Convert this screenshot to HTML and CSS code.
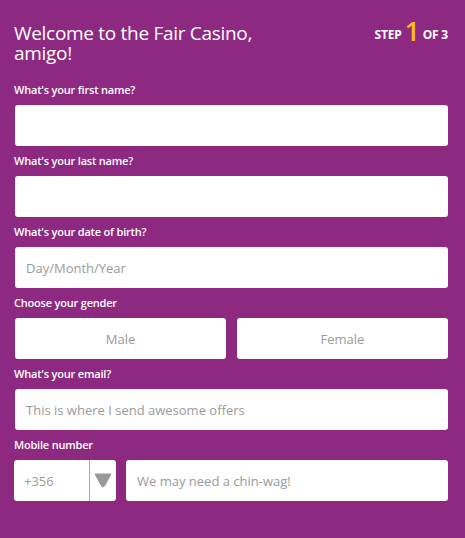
FILE: index.html
```html
<!DOCTYPE html>
<html>
<head>
    <title>Fair Casino - Sign up</title>
    <link rel="stylesheet" href="styles.css">
</head>
<body>
    <form class="signup">
        <div class="header">
            <h1>Welcome to the Fair Casino, amigo!</h1>
            <div class="step">STEP <span class="step-num">1</span> OF 3</div>
        </div>

        <div class="field">
            <label>What's your first name?</label>
            <input class="box" type="text">
        </div>

        <div class="field">
            <label>What's your last name?</label>
            <input class="box" type="text">
        </div>

        <div class="field">
            <label>What's your date of birth?</label>
            <input class="box" type="text" placeholder="Day/Month/Year">
        </div>

        <div class="field">
            <label>Choose your gender</label>
            <div class="gender">
                <button type="button" class="box choice">Male</button>
                <button type="button" class="box choice">Female</button>
            </div>
        </div>

        <div class="field">
            <label>What's your email?</label>
            <input class="box" type="text" placeholder="This is where I send awesome offers">
        </div>

        <div class="field">
            <label>Mobile number</label>
            <div class="phone">
                <div class="box code">
                    <span class="code-value">+356</span>
                    <span class="code-arrow">
                        <svg width="18" height="15" viewBox="0 0 18 15">
                            <path d="M1 1 H17 L10.5 13 Q9 15 7.5 13 Z" fill="#999" stroke="#999" stroke-linejoin="round"/>
                        </svg>
                    </span>
                </div>
                <input class="box number" type="text" placeholder="We may need a chin-wag!">
            </div>
        </div>
    </form>
</body>
</html>
```

FILE: styles.css
```css
body {
    margin: 0;
    background: #8e2981;
    font-family: "Open Sans", "Liberation Sans", sans-serif;
    color: #fff;
}
.signup {
    padding: 23px 17px 30px 14px;
    display: flex;
    flex-direction: column;
    gap: 8px;
}
.header {
    display: flex;
    justify-content: space-between;
    align-items: flex-start;
    margin-bottom: 12px;
}
.header h1 {
    margin: 0;
    width: 270px;
    font-size: 19px;
    font-weight: 400;
    line-height: 20px;
    letter-spacing: -0.3px;
}
.step {
    font-size: 12px;
    font-weight: 700;
    letter-spacing: -0.2px;
    line-height: 20px;
    margin-top: -2px;
}
.step-num {
    color: #fbbd12;
    font-size: 27px;
    font-weight: 600;
    vertical-align: -2px;
}
.field {
    display: flex;
    flex-direction: column;
    gap: 8px;
}
.field label {
    font-size: 11px;
    font-weight: 600;
    line-height: 14px;
    letter-spacing: -0.2px;
}
.box {
    box-sizing: border-box;
    height: 41px;
    margin-left: 1px;
    border: none;
    border-radius: 3px;
    background: #fff;
    font-family: inherit;
    font-size: 13px;
    color: #555;
    padding: 0 11px;
    outline: none;
}
.box::placeholder {
    color: #9a9a9a;
}
.gender {
    display: flex;
    gap: 10px;
}
.choice {
    flex: 1;
    color: #9a9a9a;
    text-align: center;
}
.phone {
    display: flex;
    gap: 10px;
}
.code {
    width: 102px;
    margin-left: 0;
    padding: 0;
    display: flex;
    align-items: center;
}
.code-value {
    width: 75px;
    padding-left: 10px;
    box-sizing: border-box;
    color: #9a9a9a;
}
.code-arrow {
    height: 100%;
    flex: 1;
    border-left: 1px solid #aaa;
    display: flex;
    align-items: center;
    justify-content: center;
}
.number {
    flex: 1;
    margin-left: 0;
}
```
